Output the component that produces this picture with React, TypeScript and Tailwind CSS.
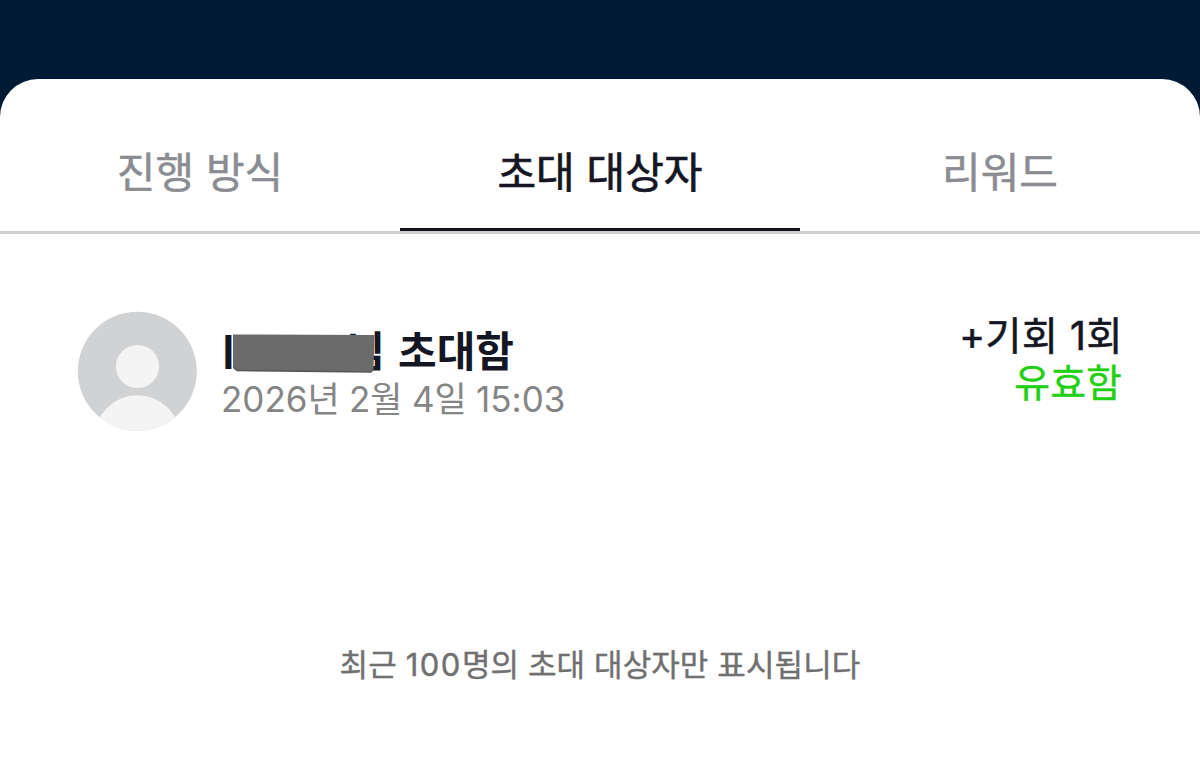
import clsx from 'clsx'

const tabs = [
  { id: 'how', label: '진행 방식' },
  { id: 'invitees', label: '초대 대상자' },
  { id: 'rewards', label: '리워드' },
]

function TabBar({ active }: { active: string }) {
  return (
    <div role="tablist" className="grid h-[155px] grid-cols-3 border-b-3 border-[#cfcfd0]">
      {tabs.map((t) => (
        <button
          key={t.id}
          role="tab"
          aria-selected={t.id === active}
          className={clsx(
            'flex items-start justify-center border-b-3 pt-[63px] text-[42px] leading-[62px] whitespace-nowrap',
            t.id === active
              ? 'border-[#10131c] text-[#141623] [-webkit-text-stroke:0.7px]'
              : 'border-transparent text-[#8b8c91] [-webkit-text-stroke:0.5px]',
          )}
        >
          {t.label}
        </button>
      ))}
    </div>
  )
}

function Avatar() {
  return (
    <svg viewBox="0 0 120 120" className="size-[120px] shrink-0" aria-hidden>
      <defs>
        <clipPath id="avatar-clip">
          <circle cx="60.3" cy="60.3" r="59.5" />
        </clipPath>
      </defs>
      <g clipPath="url(#avatar-clip)">
        <rect width="120" height="120" fill="#d0d2d4" />
        <circle cx="60.5" cy="55.5" r="21.6" fill="#f4f4f5" />
        <circle cx="60.5" cy="127.5" r="43.2" fill="#f4f4f5" />
      </g>
    </svg>
  )
}

// Name stays hidden apart from its first letter
function MaskedName() {
  return (
    <span className="relative inline-flex w-[164px] justify-between pl-px">
      <span className="text-[46px] font-semibold">I</span>
      <span>님</span>
      <svg viewBox="0 0 143 40" className="absolute top-[13px] left-[12px] h-[40px] w-[143px]" aria-hidden>
        <path d="M0 0.500L141.500 1L140.500 35L138 38L4 36.500L0 33Z" fill="#6b6b6b" />
        <path d="M0 33L4 36.500L138 38L140.500 35" fill="none" stroke="#55565d" strokeWidth="1.500" />
      </svg>
    </span>
  )
}

function InviteRow() {
  return (
    <div className="flex items-start pt-[77px] pr-[77px] pl-[77px]">
      <Avatar />
      <div className="ml-[24px] pt-[10px]">
        <p className="flex h-[62px] gap-[13px] text-[42px] leading-[62px] font-bold text-[#141623]">
          <MaskedName />
          <span>초대함</span>
        </p>
        <p className="-mt-[11px] text-[35px] leading-[54px] [word-spacing:-0.5px] whitespace-nowrap text-[#858585]">
          2026년 2월 4일 15:03
        </p>
      </div>
      <div className="ml-auto text-right whitespace-nowrap">
        <p className="-mt-[3px] text-[39px] leading-[56px] tracking-[0.6px] text-[#141623] [-webkit-text-stroke:0.6px]">
          +기회 1회
        </p>
        <p className="-mt-[9px] pr-px text-[39px] leading-[56px] text-[#21cf13] [-webkit-text-stroke:0.3px]">유효함</p>
      </div>
    </div>
  )
}

export default function App() {
  return (
    <div className="h-[771px] w-[1200px] overflow-hidden bg-[#001a33] pt-[79px] font-['Inter','Noto_Sans_CJK_KR',sans-serif]">
      <main className="flex h-[692px] flex-col rounded-t-[38px] bg-white">
        <TabBar active="invitees" />
        <InviteRow />
        <p className="mt-[211px] text-center text-[31px] leading-[46px] tracking-[0.1px] whitespace-nowrap text-[#707070] [-webkit-text-stroke:0.4px]">
          최근 <span className="tracking-[1.5px]">100</span>명의 초대 대상자만 표시됩니다
        </p>
      </main>
    </div>
  )
}
